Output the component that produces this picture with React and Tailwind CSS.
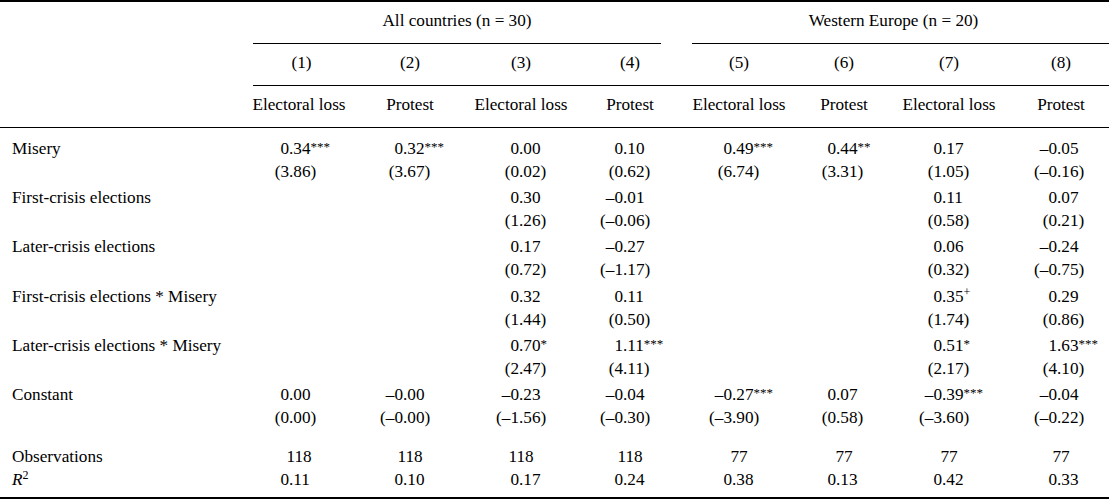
const GRID =
  "grid grid-cols-[248px_102px_120px_102px_116px_102px_108px_102px_109px]";

// width of the integer part per column, so the decimal points line up
const INT_W = [
  "w-[41px]",
  "w-[53px]",
  "w-[49px]",
  "w-[51px]",
  "w-[44px]",
  "w-[46px]",
  "w-[44px]",
  "w-[57px]",
];

const rows = [
  {
    label: "Misery",
    coef: ["0.34***", "0.32***", "0.00", "0.10", "0.49***", "0.44**", "0.17", "–0.05"],
    se: ["(3.86)", "(3.67)", "(0.02)", "(0.62)", "(6.74)", "(3.31)", "(1.05)", "(–0.16)"],
  },
  {
    label: "First-crisis elections",
    coef: ["", "", "0.30", "–0.01", "", "", "0.11", "0.07"],
    se: ["", "", "(1.26)", "(–0.06)", "", "", "(0.58)", "(0.21)"],
  },
  {
    label: "Later-crisis elections",
    coef: ["", "", "0.17", "–0.27", "", "", "0.06", "–0.24"],
    se: ["", "", "(0.72)", "(–1.17)", "", "", "(0.32)", "(–0.75)"],
  },
  {
    label: "First-crisis elections * Misery",
    coef: ["", "", "0.32", "0.11", "", "", "0.35+", "0.29"],
    se: ["", "", "(1.44)", "(0.50)", "", "", "(1.74)", "(0.86)"],
  },
  {
    label: "Later-crisis elections * Misery",
    coef: ["", "", "0.70*", "1.11***", "", "", "0.51*", "1.63***"],
    se: ["", "", "(2.47)", "(4.11)", "", "", "(2.17)", "(4.10)"],
  },
  {
    label: "Constant",
    coef: ["0.00", "–0.00", "–0.23", "–0.04", "–0.27***", "0.07", "–0.39***", "–0.04"],
    se: ["(0.00)", "(–0.00)", "(–1.56)", "(–0.30)", "(–3.90)", "(0.58)", "(–3.60)", "(–0.22)"],
  },
];

const nums = ["(1)", "(2)", "(3)", "(4)", "(5)", "(6)", "(7)", "(8)"];
const deps = [
  "Electoral loss",
  "Protest",
  "Electoral loss",
  "Protest",
  "Electoral loss",
  "Protest",
  "Electoral loss",
  "Protest",
];

function Num({ v, i }) {
  if (!v) return <div />;
  const m = v.match(/^(.*?)(\.\d+\)?)(.*)$/);
  const int = m[1];
  const frac = m[2];
  const sup = m[3];
  return (
    <div className="flex whitespace-nowrap">
      <span className={INT_W[i] + " shrink-0 text-right"}>{int}</span>
      <span>
        {frac}
        {sup === "+" && (
          <span className="relative -top-[6px] text-[12px] leading-none">+</span>
        )}
        {sup && sup !== "+" && (
          <span className="relative -top-[3px] text-[13px] leading-none">{sup}</span>
        )}
      </span>
    </div>
  );
}

function Center({ children, i }) {
  return (
    <div className={i === 7 ? "text-center pl-[13px]" : "text-center"}>{children}</div>
  );
}

export default function App() {
  return (
    <div className="w-[1109px] h-[501px] bg-white text-black font-['Liberation_Serif',serif] text-[17.2px] overflow-hidden">
      <div className="border-t-2 border-black" />

      {/* spanners */}
      <div className={GRID + " h-[42px]"}>
        <div />
        <div className="col-span-4 ml-[5px] mr-[27px] border-b border-black flex items-center justify-center pb-[4px]">
          All countries (n = 30)
        </div>
        <div className="col-span-4 ml-[4px] border-b border-black flex items-center justify-center pb-[4px] pr-[14px]">
          Western Europe (n = 20)
        </div>
      </div>

      {/* model numbers */}
      <div className={GRID + " h-[42px]"}>
        <div />
        {nums.map((n, i) => (
          <div
            key={n}
            className={
              "border-b border-black flex items-center justify-center pb-[3px]" +
              (i === 0 ? " ml-[5px]" : "") +
              (i === 7 ? " pl-[13px]" : "")
            }
          >
            {n}
          </div>
        ))}
      </div>

      {/* dependent variables */}
      <div className={GRID + " h-[42px] border-b border-black items-center pb-[3px]"}>
        <div />
        {deps.map((d, i) => (
          <Center key={i} i={i}>
            {d}
          </Center>
        ))}
      </div>

      <div className="pt-[8.5px]">
        {rows.map((r) => (
          <div key={r.label} className="pb-[3.4px] leading-[23px]">
            <div className={GRID + " h-[23px]"}>
              <div className="pl-[12px] whitespace-nowrap">{r.label}</div>
              {r.coef.map((v, i) => (
                <Num key={i} v={v} i={i} />
              ))}
            </div>
            <div className={GRID + " h-[23px]"}>
              <div />
              {r.se.map((v, i) => (
                <Num key={i} v={v} i={i} />
              ))}
            </div>
          </div>
        ))}
      </div>

      <div className="mt-[12.6px] pb-[5.5px] leading-[23px] border-b-2 border-black">
        <div className={GRID + " h-[23px]"}>
          <div className="pl-[12px]">Observations</div>
          {["118", "118", "118", "118", "77", "77", "77", "77"].map((v, i) => (
            <Center key={i} i={i}>
              {v}
            </Center>
          ))}
        </div>
        <div className={GRID + " h-[23px]"}>
          <div className="pl-[12px]">
            <i>R</i>
            <span className="relative -top-[6px] text-[12px] leading-none">2</span>
          </div>
          {["0.11", "0.10", "0.17", "0.24", "0.38", "0.13", "0.42", "0.33"].map((v, i) => (
            <Num key={i} v={v} i={i} />
          ))}
        </div>
      </div>
    </div>
  );
}
